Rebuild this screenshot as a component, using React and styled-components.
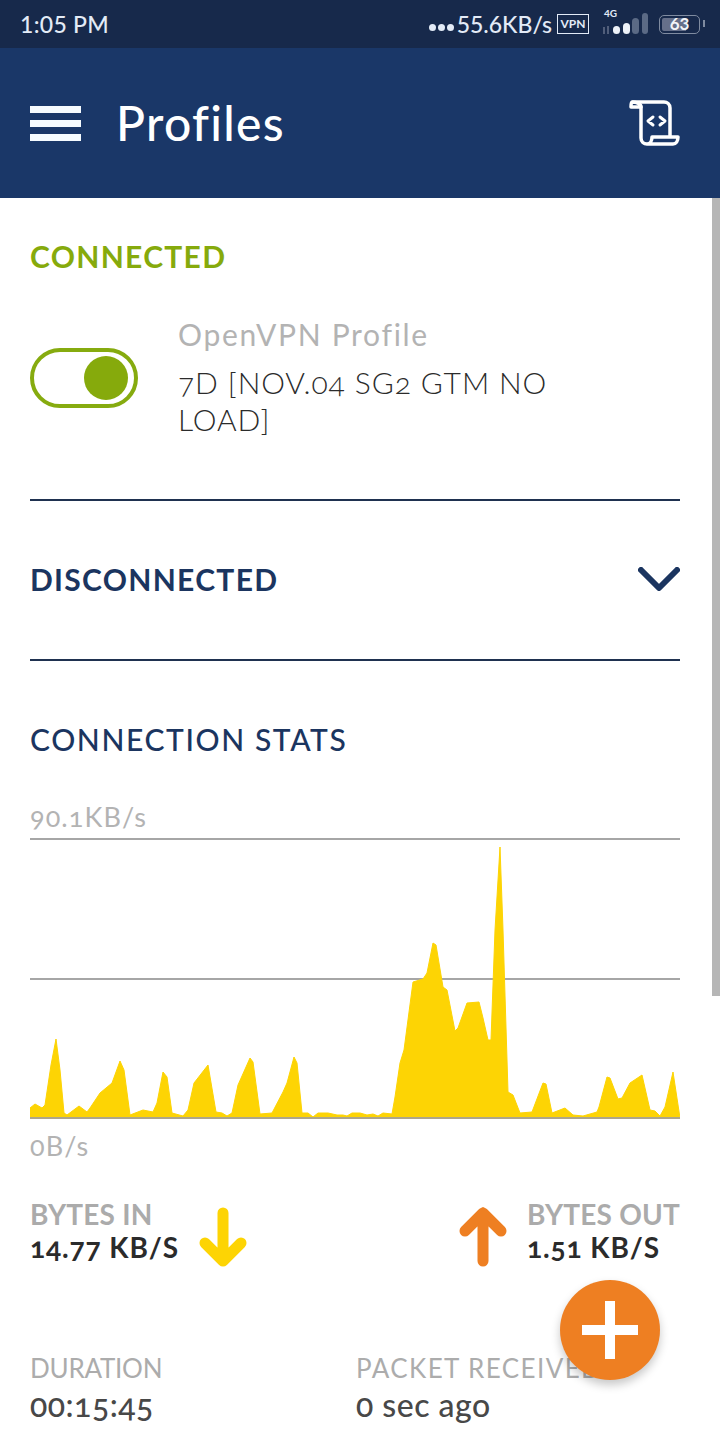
import React from 'react';
import styled, { createGlobalStyle } from 'styled-components';

const GlobalStyle = createGlobalStyle`
  html, body {
    margin: 0;
    padding: 0;
    background: #fff;
    font-family: 'Lato', 'Open Sans', sans-serif;
  }
`;

const Page = styled.div`
  position: relative;
  width: 720px;
  height: 1440px;
  overflow: hidden;
  background: #fff;
`;

const StatusBar = styled.div`
  height: 48px;
  box-sizing: border-box;
  padding: 0 20px 0 20px;
  display: flex;
  align-items: center;
  justify-content: space-between;
  background: #17294b;
  color: #e3ebf7;
`;

const Clock = styled.span`
  font-size: 23px;
  font-weight: 500;
  letter-spacing: 0.3px;
`;

const StatusRight = styled.div`
  display: flex;
  align-items: center;
`;

const Dots = styled.div`
  display: flex;
  gap: 2px;
  margin-right: 3px;
  padding-top: 6px;
`;

const Dot = styled.i`
  width: 7px;
  height: 7px;
  border-radius: 50%;
  background: #e3ebf7;
`;

const Speed = styled.span`
  font-size: 23px;
  font-weight: 500;
`;

const VpnBadge = styled.span`
  margin-left: 5px;
  width: 32px;
  height: 20px;
  box-sizing: border-box;
  border: 1.5px solid #e3ebf7;
  font-size: 12px;
  font-weight: 700;
  line-height: 17px;
  text-align: center;
`;

const Signal = styled.div`
  position: relative;
  margin-left: 14px;
  width: 45px;
  height: 36px;
`;

const NetLabel = styled.span`
  position: absolute;
  left: 1px;
  top: 1px;
  font-size: 10px;
  font-weight: 700;
`;

const SignalSvg = styled.svg`
  position: absolute;
  left: 0;
  top: 0;
`;

const Battery = styled.div`
  margin-left: 11px;
  width: 41px;
  height: 19px;
  box-sizing: border-box;
  border: 1.5px solid #7f8ba0;
  border-radius: 5px;
  position: relative;
  font-size: 17px;
  font-weight: 700;
  line-height: 16px;
  text-align: center;
  color: #f2f4f8;
  background: linear-gradient(90deg, #66708a 0 66%, transparent 66%);
  background-clip: content-box;
  padding: 2px;
  &::after {
    content: '';
    position: absolute;
    right: -6px;
    top: 4px;
    width: 2px;
    height: 7px;
    background: #7f8ba0;
  }
`;

const BatteryText = styled.span`
  display: block;
  margin-top: -2px;
`;

const AppBar = styled.header`
  height: 150px;
  box-sizing: border-box;
  padding: 0 40px 0 30px;
  display: flex;
  align-items: center;
  background: #1a3768;
  color: #fff;
`;

const Burger = styled.div`
  width: 51px;
  display: flex;
  flex-direction: column;
  gap: 7px;
`;

const BurgerBar = styled.i`
  height: 7px;
  background: #f6fbff;
`;

const Title = styled.h1`
  margin: 0 0 0 35px;
  flex: 1;
  font-size: 48px;
  font-weight: 500;
  line-height: 1;
  letter-spacing: 1.3px;
`;

const ScriptSvg = styled.svg`
  margin-right: -1px;
`;

const Content = styled.main`
  padding: 0 40px 0 30px;
`;

const SectionHead = styled.h2`
  margin: 0;
  font-size: 30px;
  line-height: 36px;
  font-weight: ${p => p.$weight || 700};
  letter-spacing: ${p => p.$spacing || 1.3}px;
  color: ${p => p.$color || '#1b3560'};
`;

const ConnectedBlock = styled.section`
  padding-top: 40px;
  height: 303px;
  box-sizing: border-box;
  border-bottom: 2px solid #1f3150;
`;

const ProfileRow = styled.div`
  margin-top: 42px;
  display: flex;
  align-items: flex-start;
`;

const Toggle = styled.div`
  margin-top: 32px;
  width: 108px;
  height: 60px;
  box-sizing: border-box;
  border: 4px solid #86ab0f;
  border-radius: 30px;
  display: flex;
  align-items: center;
  justify-content: flex-end;
  padding-right: 6px;
`;

const Knob = styled.i`
  width: 44px;
  height: 44px;
  border-radius: 50%;
  background: #86aa0c;
`;

const ProfileText = styled.div`
  margin-left: 40px;
  flex: 1;
`;

const ProfileKind = styled.div`
  font-size: 30px;
  line-height: 36px;
  letter-spacing: 1.7px;
  color: #b3b3b3;
`;

const ProfileName = styled.div`
  margin-top: 12px;
  font-size: 30px;
  font-weight: 300;
  line-height: 37px;
  letter-spacing: 0.9px;
  color: #2b2b2b;
  width: 400px;
  font-variant-numeric: oldstyle-nums;
`;

const DisconnectedBlock = styled.section`
  height: 160px;
  box-sizing: border-box;
  padding-bottom: 2px;
  border-bottom: 2px solid #1f3150;
  display: flex;
  align-items: center;
  justify-content: space-between;
`;

const StatsBlock = styled.section`
  padding-top: 60px;
`;

const AxisLabel = styled.div`
  margin-top: ${p => p.$top}px;
  font-size: 27px;
  line-height: 32px;
  letter-spacing: 1.1px;
  color: #b3b3b3;
  font-variant-numeric: oldstyle-nums;
`;

const ChartWrap = styled.div`
  margin-top: 3px;
  height: 283px;
`;

const ChartSvg = styled.svg`
  display: block;
  width: 650px;
  height: 283px;
`;

const RateRow = styled.div`
  margin-top: 36px;
  display: flex;
  justify-content: space-between;
`;

const Rate = styled.div`
  display: flex;
  align-items: flex-start;
  gap: 20px;
`;

const RateLabel = styled.div`
  font-size: 28px;
  line-height: 33px;
  font-weight: 700;
  letter-spacing: 0.2px;
  color: #ababab;
`;

const RateValue = styled.div`
  font-size: 28px;
  line-height: 32px;
  font-weight: 700;
  letter-spacing: 0.9px;
  color: #2b2b2b;
  font-variant-numeric: oldstyle-nums;
`;

const ArrowSvg = styled.svg`
  margin-top: 8px;
`;

const InfoRow = styled.div`
  margin-top: 84px;
  display: grid;
  grid-template-columns: 326px 1fr;
`;

const InfoLabel = styled.div`
  font-size: 26px;
  line-height: 32px;
  letter-spacing: ${p => p.$spacing}px;
  color: #acacac;
  white-space: nowrap;
`;

const InfoValue = styled.div`
  margin-top: 2px;
  font-size: 32px;
  line-height: 38px;
  font-weight: 500;
  letter-spacing: 0.5px;
  color: #484848;
  font-variant-numeric: oldstyle-nums;
`;

const Scrollbar = styled.div`
  position: absolute;
  right: 0;
  top: 198px;
  width: 8px;
  height: 798px;
  background: #b6b6b6;
`;

const Fab = styled.button`
  position: absolute;
  left: 560px;
  top: 1280px;
  width: 100px;
  height: 100px;
  padding: 0;
  border: none;
  border-radius: 50%;
  background: #ee7f22;
  box-shadow: 0 5px 10px rgba(0, 0, 0, 0.22);
  display: flex;
  align-items: center;
  justify-content: center;
`;

// sampled from the traffic graph, in page pixels
const traffic = [
  [30, 1118], [30, 1108], [35, 1104], [42, 1108], [45, 1105], [51, 1065], [56, 1039], [60, 1070], [64, 1113], [67, 1115],
  [79, 1106], [87, 1112], [90, 1108], [100, 1093], [112, 1083], [120, 1061], [124, 1070], [130, 1115], [143, 1110],
  [153, 1112], [157, 1103], [163, 1072], [167, 1077], [172, 1113], [183, 1116], [188, 1110], [194, 1083], [208, 1065],
  [216, 1112], [222, 1113], [227, 1116], [232, 1113], [238, 1085], [250, 1058], [253, 1062], [260, 1114], [272, 1113],
  [283, 1092], [287, 1083], [294, 1057], [297, 1063], [302, 1113], [308, 1113], [313, 1117], [318, 1113], [328, 1113],
  [337, 1115], [343, 1115], [347, 1116], [352, 1113], [360, 1113], [367, 1115], [373, 1114], [378, 1116], [383, 1113],
  [392, 1114], [395, 1097], [400, 1063], [404, 1050], [413, 982], [423, 979], [427, 973], [433, 943], [436, 945],
  [443, 987], [447, 990], [455, 1031], [458, 1028], [467, 1003], [479, 1002], [483, 1018], [488, 1040], [491, 1040],
  [495, 930], [500, 847], [503, 930], [508, 1092], [513, 1095], [520, 1113], [532, 1112], [543, 1083], [546, 1084],
  [552, 1113], [565, 1108], [573, 1115], [583, 1116], [597, 1112], [599, 1107], [607, 1077], [610, 1078], [618, 1099],
  [622, 1098], [630, 1083], [642, 1075], [650, 1110], [655, 1111], [660, 1116], [665, 1107], [673, 1072], [680, 1118],
];

const ScriptIcon = () => (
  <ScriptSvg width="52" height="48" viewBox="0 0 52 48" fill="none" stroke="#fff" strokeWidth="3.5" strokeLinejoin="round" strokeLinecap="round">
    <path d="M4 3h31c3 0 6 2 6 6v29M12 8v31c0 4 3 6 6 6h26c3 0 5-3 5-7H23c0 4-2 7-5 7" />
    <path d="M3 3c5 0 9 2 9 5H2c0-2 0-5 1-5z" />
    <path d="M24 18l-5 4 5 4M31 18l5 4-5 4" strokeWidth="3" />
  </ScriptSvg>
);

const SignalIcon = () => (
  <SignalSvg width="45" height="36" viewBox="0 0 45 36">
    <path d="M1 21v7M5 20v8" stroke="#66708a" strokeWidth="1.5" />
    <rect x="10" y="20" width="7" height="8" rx="3.5" fill="#eef2f8" />
    <rect x="20" y="17" width="7" height="11" rx="3.5" fill="#eef2f8" />
    <rect x="29" y="12" width="7" height="16" rx="3.5" fill="#5b6a85" />
    <rect x="39" y="7" width="6" height="21" rx="3" fill="#5b6a85" />
  </SignalSvg>
);

const Chevron = () => (
  <svg width="42" height="24" viewBox="0 0 42 24" fill="none" stroke="#1b3560" strokeWidth="6" strokeLinecap="round" strokeLinejoin="round">
    <path d="M3 3l18 18L39 3" />
  </svg>
);

const TrafficChart = () => (
  <ChartSvg viewBox="30 836 650 283">
    <path d="M30 839H680M30 979H680" stroke="#a6a6a6" strokeWidth="2" />
    <polygon points={traffic.map(p => p.join(',')).join(' ')} fill="#fdd404" stroke="#fdd404" strokeWidth="1" strokeLinejoin="round" />
    <path d="M30 1118H680" stroke="#ada68a" strokeWidth="2" />
  </ChartSvg>
);

const ArrowIcon = ({ color, up }) => (
  <ArrowSvg width="48" height="62" viewBox="0 0 48 62" fill="none" stroke={color} strokeWidth="11" strokeLinecap="round" strokeLinejoin="round">
    {up
      ? <path d="M24 55V7M6 25L24 7l18 18" />
      : <path d="M24 7v48M6 37l18 18 18-18" />}
  </ArrowSvg>
);

const App = () => (
  <Page>
    <GlobalStyle />
    <StatusBar>
      <Clock>1:05 PM</Clock>
      <StatusRight>
        <Dots><Dot /><Dot /><Dot /></Dots>
        <Speed>55.6KB/s</Speed>
        <VpnBadge>VPN</VpnBadge>
        <Signal>
          <NetLabel>4G</NetLabel>
          <SignalIcon />
        </Signal>
        <Battery><BatteryText>63</BatteryText></Battery>
      </StatusRight>
    </StatusBar>

    <AppBar>
      <Burger><BurgerBar /><BurgerBar /><BurgerBar /></Burger>
      <Title>Profiles</Title>
      <ScriptIcon />
    </AppBar>

    <Content>
      <ConnectedBlock>
        <SectionHead $color="#86aa0c">CONNECTED</SectionHead>
        <ProfileRow>
          <Toggle><Knob /></Toggle>
          <ProfileText>
            <ProfileKind>OpenVPN Profile</ProfileKind>
            <ProfileName>7D [NOV.04 SG2 GTM NO LOAD]</ProfileName>
          </ProfileText>
        </ProfileRow>
      </ConnectedBlock>

      <DisconnectedBlock>
        <SectionHead>DISCONNECTED</SectionHead>
        <Chevron />
      </DisconnectedBlock>

      <StatsBlock>
        <SectionHead $weight={500} $spacing={1.6}>CONNECTION STATS</SectionHead>
        <AxisLabel $top={44}>90.1KB/s</AxisLabel>
        <ChartWrap><TrafficChart /></ChartWrap>
        <AxisLabel $top={11}>0B/s</AxisLabel>

        <RateRow>
          <Rate>
            <div>
              <RateLabel>BYTES IN</RateLabel>
              <RateValue>14.77 KB/S</RateValue>
            </div>
            <ArrowIcon color="#fdd404" />
          </Rate>
          <Rate>
            <ArrowIcon color="#ee7f22" up />
            <div>
              <RateLabel>BYTES OUT</RateLabel>
              <RateValue>1.51 KB/S</RateValue>
            </div>
          </Rate>
        </RateRow>

        <InfoRow>
          <div>
            <InfoLabel $spacing={-0.25}>DURATION</InfoLabel>
            <InfoValue>00:15:45</InfoValue>
          </div>
          <div>
            <InfoLabel $spacing={1.4}>PACKET RECEIVED</InfoLabel>
            <InfoValue>0 sec ago</InfoValue>
          </div>
        </InfoRow>
      </StatsBlock>
    </Content>

    <Scrollbar />
    <Fab aria-label="Add">
      <svg width="56" height="58" viewBox="0 0 56 58" fill="#fff">
        <path d="M23 0h10v24H56v10H33V58H23V34H0V24H23z" />
      </svg>
    </Fab>
  </Page>
);

export default App;
